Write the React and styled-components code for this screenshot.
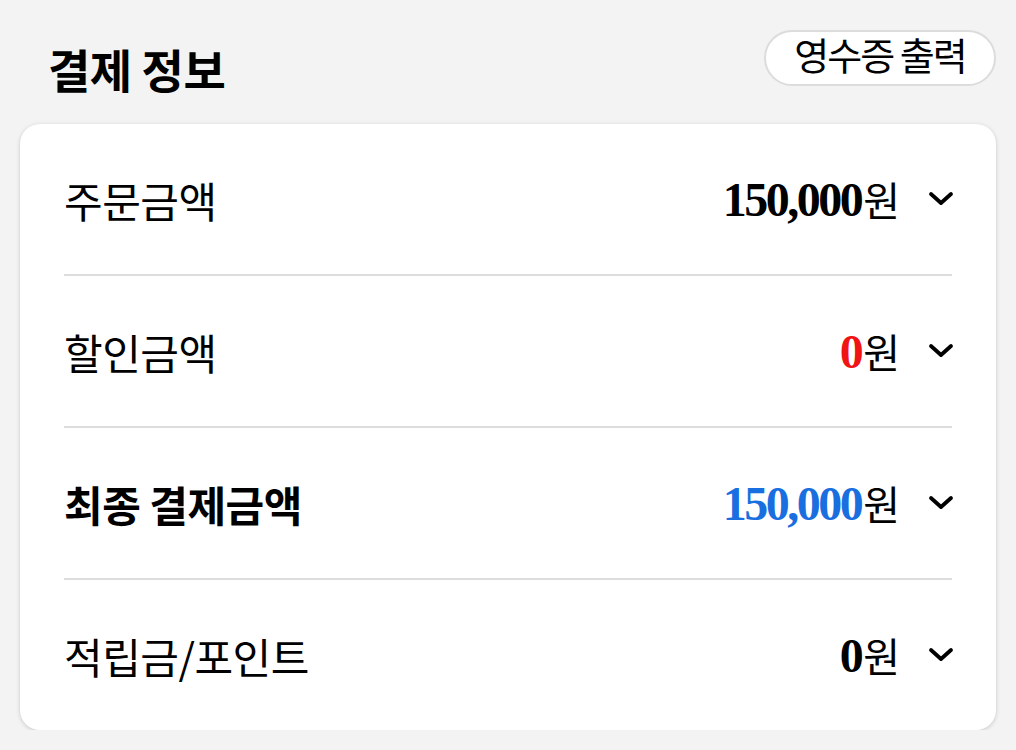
import React from 'react';
import styled, { createGlobalStyle } from 'styled-components';

const GlobalStyle = createGlobalStyle`
  html, body {
    margin: 0;
    padding: 0;
    background: #f3f3f3;
  }
  body {
    font-family: "Noto Sans CJK KR", "Noto Sans", sans-serif;
    color: #000;
  }
`;

const Page = styled.div`
  width: 1016px;
  padding: 0 20px;
  box-sizing: border-box;
`;

const Header = styled.header`
  height: 124px;
  box-sizing: border-box;
  padding: 30px 0 0 28px;
  display: flex;
  justify-content: space-between;
  align-items: flex-start;
`;

const Title = styled.h1`
  margin: 10px 0 0;
  font-size: 46px;
  line-height: 56px;
  font-weight: 700;
  letter-spacing: -0.5px;
`;

const ReceiptButton = styled.button`
  width: 232px;
  height: 56px;
  box-sizing: border-box;
  border: 2px solid #dcdcdc;
  border-radius: 28px;
  background: #fff;
  font-family: "Noto Sans CJK KR", sans-serif;
  font-size: 38px;
  letter-spacing: -2px;
  line-height: 1;
  color: #000;
  padding: 0 0 8px;
  cursor: pointer;
`;

const Card = styled.section`
  background: #fff;
  border-radius: 20px;
  box-shadow: 0 1px 4px rgba(0, 0, 0, 0.18);
  padding: 0 44px;
`;

const Row = styled.div`
  height: 150px;
  display: flex;
  align-items: center;
  justify-content: space-between;
  border-bottom: ${p => (p.$last ? 'none' : '2px solid #dcdcdc')};
`;

const Label = styled.span`
  font-size: 42px;
  letter-spacing: -0.5px;
  font-weight: ${p => (p.$bold ? 700 : 400)};
`;

const Value = styled.div`
  display: flex;
  align-items: center;
`;

const Amount = styled.span`
  font-family: "Liberation Serif", serif;
  font-weight: 700;
  font-size: 48px;
  letter-spacing: -2.5px;
  color: ${p => p.$color || '#000'};
  margin-right: 2px;
`;

const Won = styled.span`
  font-size: 40px;
`;

const Chevron = styled.svg`
  width: 26px;
  height: 18px;
  margin-left: 28px;
  margin-right: -2px;
`;

const Arrow = () => (
  <Chevron viewBox="0 0 26 18">
    <path d="M3 4 L13 13 L23 4" fill="none" stroke="#000" strokeWidth="3.8" strokeLinecap="round" strokeLinejoin="round" />
  </Chevron>
);

const rows = [
  { label: '주문금액', amount: '150,000' },
  { label: '할인금액', amount: '0', color: '#f01414' },
  { label: '최종 결제금액', amount: '150,000', color: '#1a6fe0', bold: true },
  { label: '적립금/포인트', amount: '0' },
];

export default function App() {
  return (
    <Page>
      <GlobalStyle />
      <Header>
        <Title>결제 정보</Title>
        <ReceiptButton>영수증 출력</ReceiptButton>
      </Header>
      <Card>
        {rows.map((r, i) => (
          <Row key={r.label} $last={i === rows.length - 1}>
            <Label $bold={r.bold}>{r.label}</Label>
            <Value>
              <Amount $color={r.color}>{r.amount}</Amount>
              <Won>원</Won>
              <Arrow />
            </Value>
          </Row>
        ))}
      </Card>
    </Page>
  );
}
